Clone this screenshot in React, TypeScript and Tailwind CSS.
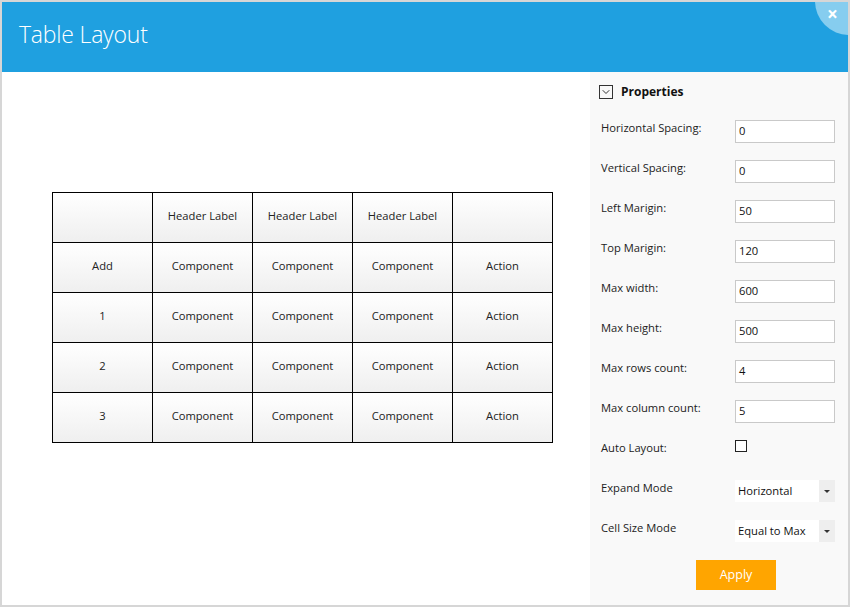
import { ChevronDown } from 'lucide-react';

const headers = ['', 'Header Label', 'Header Label', 'Header Label', ''];
const rows = ['Add', '1', '2', '3'];

const fields = [
  { label: 'Horizontal Spacing:', value: '0' },
  { label: 'Vertical Spacing:', value: '0' },
  { label: 'Left Marigin:', value: '50' },
  { label: 'Top Marigin:', value: '120' },
  { label: 'Max width:', value: '600' },
  { label: 'Max height:', value: '500' },
  { label: 'Max rows count:', value: '4' },
  { label: 'Max column count:', value: '5' },
];

const selects = [
  { label: 'Expand Mode', value: 'Horizontal' },
  { label: 'Cell Size Mode', value: 'Equal to Max' },
];

function Cell({ text }: { text: string }) {
  return (
    <div className="h-[49px] w-[99px] flex items-center justify-center pb-[2px] bg-gradient-to-b from-white to-[#efefef] text-[#222]">
      {text}
    </div>
  );
}

export default function App() {
  return (
    <div
      className="w-[850px] h-[607px] border-2 border-[#d6d6d6] bg-white flex flex-col overflow-hidden relative text-[11.2px]"
      style={{ fontFamily: '"Open Sans", "Noto Sans", sans-serif' }}
    >
      {/* Header */}
      <div className="h-[70px] shrink-0 bg-[#1fa0e0] flex items-center pl-[17px] pb-[6px]">
        <h1 className="text-[23px] font-light text-white tracking-[-0.2px]">Table Layout</h1>
      </div>

      {/* Close bubble */}
      <div className="absolute -top-[35px] -right-[35px] w-[68px] h-[68px] rounded-full bg-[#86cdef] flex items-end justify-start pl-[12px] pb-[11px]">
        <span className="text-white text-[19px] font-bold leading-none">×</span>
      </div>

      <div className="flex flex-1 min-h-0">
        {/* Canvas */}
        <div className="flex-1 pl-[50px] pt-[120px]">
          <div className="grid grid-cols-5 gap-px bg-black p-px w-[501px]">
            {headers.map((h, i) => (
              <Cell key={'h' + i} text={h} />
            ))}
            {rows.map((r) =>
              [r, 'Component', 'Component', 'Component', 'Action'].map((t, j) => (
                <Cell key={r + j} text={t} />
              ))
            )}
          </div>
        </div>

        {/* Properties */}
        <div className="w-[258px] shrink-0 bg-[#f9f9f9] flex flex-col">
          <div className="h-[39px] flex items-center pl-[9px] gap-[8px]">
            <div className="w-[14px] h-[14px] border border-[#333] flex items-center justify-center">
              <ChevronDown className="w-[12px] h-[12px] text-[#333]" strokeWidth={2} />
            </div>
            <span className="font-bold text-[12px] text-[#111]">Properties</span>
          </div>

          {fields.map((f) => (
            <div key={f.label} className="h-[40px] flex items-center pl-[11px]">
              <span className="w-[134px] mb-[6px] text-[#222]">{f.label}</span>
              <div className="w-[100px] h-[23px] border border-[#c9c9c9] bg-white flex items-center pl-[3px] pt-[1px] text-[#111]">
                {f.value}
              </div>
            </div>
          ))}

          <div className="h-[40px] flex items-center pl-[11px]">
            <span className="w-[134px] self-start pt-[9px] text-[#222]">Auto Layout:</span>
            <div className="w-[12px] h-[12px] border border-[#222] bg-white mb-[10px]" />
          </div>

          {selects.map((s) => (
            <div key={s.label} className="h-[40px] flex items-center pl-[11px]">
              <span className="w-[134px] mb-[6px] text-[#222]">{s.label}</span>
              <div className="w-[100px] h-[22px] bg-white flex items-center">
                <span className="flex-1 pl-[3px] text-[#111]">{s.value}</span>
                <div className="w-[16px] h-full bg-[#eeeeee] flex items-center justify-center">
                  <div className="w-0 h-0 border-l-[3px] border-r-[3px] border-t-[3px] border-l-transparent border-r-transparent border-t-[#333]" />
                </div>
              </div>
            </div>
          ))}

          <div className="flex pt-[9px] pl-[106px]">
            <button className="w-[80px] h-[30px] bg-[#ffa500] text-white text-[12.5px]">Apply</button>
          </div>
        </div>
      </div>
    </div>
  );
}
